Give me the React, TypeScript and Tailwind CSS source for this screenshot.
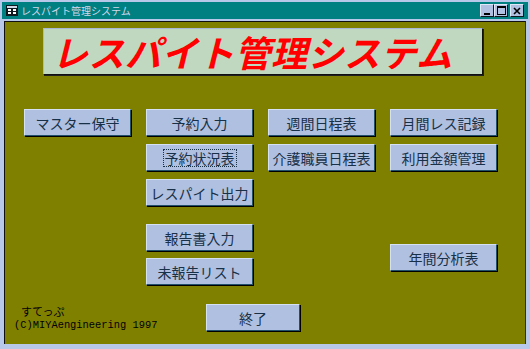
import React from 'react';

const jp = "font-['Noto_Sans_CJK_JP','Noto_Sans',sans-serif]";

function Btn({ label, w = 'w-[107px]', focus = false }: { label: string; w?: string; focus?: boolean }) {
  return (
    <button
      className={`${w} h-[27px] flex items-center justify-center bg-[#b0c0e0] border-t border-l border-t-[#d4e0f4] border-l-[#d4e0f4] border-r border-b border-r-[#20506a] border-b-[#20506a] shadow-[1px_1px_0_0_#000] text-[14px] leading-none text-[#183048] ${jp}`}
    >
      {focus ? (
        <span className="border border-dotted border-[#183048] px-[1px] py-[1px]">{label}</span>
      ) : (
        label
      )}
    </button>
  );
}

function CaptionBtn({ children, gap = false }: { children: React.ReactNode; gap?: boolean }) {
  return (
    <div
      className={`w-[14px] h-[13px] flex items-center justify-center bg-[#b0c0e0] border-t border-l border-t-[#e0e8f8] border-l-[#e0e8f8] border-r border-b border-r-[#101820] border-b-[#101820] ${gap ? 'ml-[2px]' : ''}`}
    >
      {children}
    </div>
  );
}

export default function App() {
  return (
    <div className="w-[530px] h-[349px] bg-[#b8c8e8] pt-[2px] px-[2px] overflow-hidden">
      {/* title bar */}
      <div className="h-[17px] bg-[#008080] flex items-center pl-[4px] pr-[4px]">
        <svg width="12" height="11" viewBox="0 0 12 11" className="shrink-0">
          <rect x="0" y="0" width="12" height="11" fill="#101820" />
          <rect x="1" y="1" width="10" height="2" fill="#d0d8e8" />
          <rect x="2" y="4" width="3" height="2" fill="#ffffff" />
          <rect x="7" y="4" width="3" height="2" fill="#ffffff" />
          <rect x="2" y="7" width="3" height="2" fill="#ffffff" />
          <rect x="7" y="7" width="3" height="2" fill="#ffffff" />
        </svg>
        <span className={`ml-[3px] text-[10px] leading-none text-[#d0d8ec] ${jp}`}>レスパイト管理システム</span>
        <div className="ml-auto flex items-center">
          <CaptionBtn>
            <svg width="8" height="8" viewBox="0 0 8 8"><rect x="1" y="6" width="6" height="2" fill="#000" /></svg>
          </CaptionBtn>
          <CaptionBtn>
            <svg width="9" height="9" viewBox="0 0 9 9"><rect x="0.5" y="0.5" width="8" height="8" fill="none" stroke="#000" /><rect x="0" y="0" width="9" height="2" fill="#000" /></svg>
          </CaptionBtn>
          <CaptionBtn gap>
            <svg width="8" height="8" viewBox="0 0 8 8"><path d="M1 1 L7 7 M7 1 L1 7" stroke="#000" strokeWidth="1.6" /></svg>
          </CaptionBtn>
        </div>
      </div>

      {/* client area */}
      <div className="mt-[2px] mx-[2px] h-[323px] bg-[#808000] border-l border-t border-l-[#101010] border-t-[#101010] border-r border-r-[#20304a]">
        {/* heading box */}
        <div className="ml-[38px] mt-[6px] w-[440px] h-[47px] bg-[#c0d8c0] border-t border-l border-t-[#a8b8d8] border-l-[#a8b8d8] border-r border-b border-r-[#101010] border-b-[#101010] shadow-[1px_1px_0_0_#202020] flex items-start pl-[8px] pt-[1px]">
          <span className={`text-[36px] leading-[42px] italic font-bold text-[#ff0000] tracking-[0.5px] ${jp}`}>
            レスパイト管理システム
          </span>
        </div>

        {/* main buttons */}
        <div className="ml-[19px] mt-[34px] grid grid-cols-[107px_107px_107px_107px] gap-x-[15px] gap-y-[8px]">
          <Btn label="マスター保守" />
          <Btn label="予約入力" />
          <Btn label="週間日程表" />
          <Btn label="月間レス記録" />
          <div />
          <Btn label="予約状況表" focus />
          <Btn label="介護職員日程表" />
          <Btn label="利用金額管理" />
          <div />
          <Btn label="レスパイト出力" />
          <div />
          <div />
        </div>

        {/* lower buttons */}
        <div className="ml-[19px] grid grid-cols-[107px_107px_107px_107px] gap-x-[15px]">
          <div />
          <div className="mt-[18px] flex flex-col gap-[7px]">
            <Btn label="報告書入力" />
            <Btn label="未報告リスト" />
          </div>
          <div />
          <div className="mt-[38px]">
            <Btn label="年間分析表" />
          </div>
        </div>

        {/* footer */}
        <div className="mt-[19px] flex items-start">
          <div className="w-[201px] text-black">
            <div className={`pl-[16px] text-[11px] leading-[14px] ${jp}`}>すてっぷ</div>
            <div className="pl-[9px] mt-[1px] text-[10.4px] leading-[12px] font-['Liberation_Mono',monospace]">
              (C)MIYAengineering 1997
            </div>
          </div>
          <Btn label="終了" w="w-[94px]" />
        </div>
      </div>
    </div>
  );
}
